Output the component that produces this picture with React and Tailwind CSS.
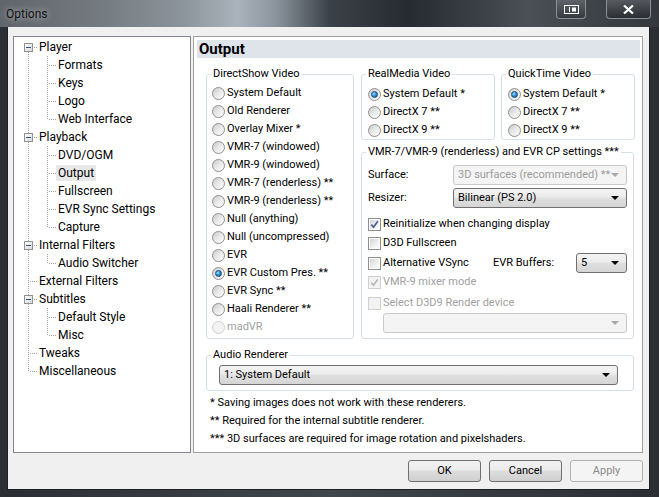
import React from "react";

const FONT = "font-['Roboto','Noto_Sans',sans-serif]";

function Radio({ checked, disabled }) {
  return (
    <span
      className={`w-[13px] h-[13px] rounded-full border shrink-0 flex items-center justify-center ${
        disabled
          ? "border-[#cfcfcf] bg-[#f3f3f3]"
          : "border-[#8e8f8f] bg-[linear-gradient(135deg,#cbcbcb_0%,#e9e9e9_50%,#ffffff_100%)]"
      }`}
    >
      {checked && (
        <span className="w-[7px] h-[7px] rounded-full border border-[#1b4a7a] bg-[radial-gradient(circle_at_35%_35%,#a5e4ff_0%,#2d93db_45%,#0b4f97_100%)]" />
      )}
    </span>
  );
}

function Check({ checked, disabled }) {
  return (
    <span
      className={`w-[13px] h-[13px] border shrink-0 p-[1px] flex ${
        disabled ? "border-[#cfcfcf] bg-[#f3f3f3]" : "border-[#8e8f8f] bg-white"
      }`}
    >
      <span
        className={`flex-1 flex items-center justify-center ${
          disabled ? "bg-[#f3f3f3]" : "bg-[linear-gradient(135deg,#d6d6d6_0%,#f4f4f4_70%,#ffffff_100%)]"
        }`}
      >
        {checked && (
          <svg width="9" height="9" viewBox="0 0 9 9">
            <path
              d="M1.3 4.6 L3.5 7.2 L7.8 1.2"
              fill="none"
              stroke={disabled ? "#b8b8b8" : "#4a5f97"}
              strokeWidth="1.7"
            />
          </svg>
        )}
      </span>
    </span>
  );
}

function Combo({ text, disabled, className = "" }) {
  return (
    <div
      className={`h-[20px] flex items-center rounded-[3px] border pl-[4px] pr-[7px] ${
        disabled
          ? "border-[#c5c9cc] bg-[#f4f4f4] text-[#9c9c9c]"
          : "border-[#707070] bg-[linear-gradient(180deg,#f3f3f3_0%,#ececec_45%,#e0e0e0_50%,#d5d5d5_100%)] text-black"
      } ${className}`}
    >
      <span className="flex-1 truncate">{text}</span>
      <svg width="8" height="4" viewBox="0 0 8 4" className="shrink-0">
        <path d="M0 0 H8 L4 4 Z" fill={disabled ? "#a8a8a8" : "#000"} />
      </svg>
    </div>
  );
}

function Btn({ children, disabled }) {
  return (
    <button
      className={`h-[22px] flex items-center justify-center rounded-[3px] border ${
        disabled
          ? "border-[#adb2b5] bg-[#f4f4f4] text-[#8a8a8a]"
          : "border-[#707070] bg-[linear-gradient(180deg,#f2f2f2_0%,#ebebeb_45%,#dddddd_50%,#cfcfcf_100%)] text-black"
      } w-[73px] text-[11px]`}
    >
      {children}
    </button>
  );
}

function Group({ title, className = "", inner = "", children }) {
  return (
    <fieldset className={`border border-[#d5dfe5] rounded-[3px] min-w-0 ${className}`}>
      <legend className="ml-[4px] px-[2px] leading-[14px] whitespace-nowrap">{title}</legend>
      <div className={inner}>{children}</div>
    </fieldset>
  );
}

function RadioRow({ label, checked, disabled }) {
  return (
    <div className={`h-[18px] flex items-center gap-[2px] ${disabled ? "text-[#a0a0a0]" : ""}`}>
      <Radio checked={checked} disabled={disabled} />
      <span className="whitespace-nowrap">{label}</span>
    </div>
  );
}

function CheckRow({ label, checked, disabled, className = "" }) {
  return (
    <div className={`flex items-center gap-[2px] ${disabled ? "text-[#a0a0a0]" : ""} ${className}`}>
      <Check checked={checked} disabled={disabled} />
      <span className="whitespace-nowrap">{label}</span>
    </div>
  );
}

const tree = [
  { t: "Player", kids: ["Formats", "Keys", "Logo", "Web Interface"] },
  { t: "Playback", kids: ["DVD/OGM", "Output", "Fullscreen", "EVR Sync Settings", "Capture"] },
  { t: "Internal Filters", kids: ["Audio Switcher"] },
  { t: "External Filters" },
  { t: "Subtitles", kids: ["Default Style", "Misc"] },
  { t: "Tweaks" },
  { t: "Miscellaneous" },
];

const DOT = "#a0a0a0";

function TopRow({ label, hasBox, first, last }) {
  return (
    <div className="h-[18px] flex items-center">
      <svg width="23" height="18" viewBox="0 0 23 18" className="shrink-0">
        {hasBox ? (
          <>
            {!first && <line x1="14.5" y1="0" x2="14.5" y2="5" stroke={DOT} strokeDasharray="1 1" />}
            {!last && <line x1="14.5" y1="14" x2="14.5" y2="18" stroke={DOT} strokeDasharray="1 1" />}
            <rect x="10.5" y="5.5" width="8" height="8" fill="url(#bx)" stroke="#919191" />
            <line x1="12" y1="9.5" x2="17" y2="9.5" stroke="#2d4f8c" />
            <line x1="20" y1="9.5" x2="23" y2="9.5" stroke={DOT} strokeDasharray="1 1" />
          </>
        ) : (
          <>
            <line x1="14.5" y1={first ? 9 : 0} x2="14.5" y2={last ? 10 : 18} stroke={DOT} strokeDasharray="1 1" />
            <line x1="16" y1="9.5" x2="23" y2="9.5" stroke={DOT} strokeDasharray="1 1" />
          </>
        )}
      </svg>
      <span className="px-[2px] leading-[16px]">{label}</span>
    </div>
  );
}

function ChildRow({ label, lastChild, selected }) {
  return (
    <div className="h-[18px] flex items-center">
      <svg width="42" height="18" viewBox="0 0 42 18" className="shrink-0">
        <line x1="14.5" y1="0" x2="14.5" y2="18" stroke={DOT} strokeDasharray="1 1" />
        <line x1="33.5" y1="0" x2="33.5" y2={lastChild ? 10 : 18} stroke={DOT} strokeDasharray="1 1" />
        <line x1="35" y1="9.5" x2="42" y2="9.5" stroke={DOT} strokeDasharray="1 1" />
      </svg>
      <span className={`px-[2px] leading-[16px] ${selected ? "bg-[#e8e8e8]" : ""}`}>{label}</span>
    </div>
  );
}

function Tree() {
  const rows = [];
  tree.forEach((n, i) => {
    rows.push(
      <TopRow key={n.t} label={n.t} hasBox={!!n.kids} first={i === 0} last={i === tree.length - 1} />
    );
    (n.kids || []).forEach((k, j) => {
      rows.push(
        <ChildRow key={k} label={k} lastChild={j === n.kids.length - 1} selected={k === "Output"} />
      );
    });
  });
  return (
    <div className="w-[178px] h-[417px] bg-white border border-[#828790] pt-[1px] text-[12px] text-black">
      <svg width="0" height="0" className="absolute">
        <defs>
          <linearGradient id="bx" x1="0" y1="0" x2="1" y2="1">
            <stop offset="0" stopColor="#ffffff" />
            <stop offset="1" stopColor="#d8d8d8" />
          </linearGradient>
        </defs>
      </svg>
      {rows}
    </div>
  );
}

function Panel() {
  return (
    <div className="w-[450px] h-[417px] bg-white border border-[#a0a0a0] text-[11px] text-black">
      <div className="mt-[3px] ml-[3px] mr-[2px] h-[18px] bg-[#dfe4ea] flex items-center pl-[2px]">
        <span className="text-[15px] font-bold leading-none">Output</span>
      </div>
      <div className="pl-[12px] pt-[9px]">
        <div className="flex gap-[7px]">
          <Group title="DirectShow Video" className="w-[148px] h-[272px]" inner="pl-[5px] pt-[3px]">
            <RadioRow label="System Default" />
            <RadioRow label="Old Renderer" />
            <RadioRow label="Overlay Mixer *" />
            <RadioRow label="VMR-7 (windowed)" />
            <RadioRow label="VMR-9 (windowed)" />
            <RadioRow label="VMR-7 (renderless) **" />
            <RadioRow label="VMR-9 (renderless) **" />
            <RadioRow label="Null (anything)" />
            <RadioRow label="Null (uncompressed)" />
            <RadioRow label="EVR" />
            <RadioRow label="EVR Custom Pres. **" checked />
            <RadioRow label="EVR Sync **" />
            <RadioRow label="Haali Renderer **" />
            <RadioRow label="madVR" disabled />
          </Group>
          <div className="flex flex-col">
            <div className="flex gap-[6px]">
              <Group title="RealMedia Video" className="w-[134px] h-[73px]" inner="pl-[6px] pt-[4px]">
                <RadioRow label="System Default *" checked />
                <RadioRow label="DirectX 7 **" />
                <RadioRow label="DirectX 9 **" />
              </Group>
              <Group title="QuickTime Video" className="w-[134px] h-[73px]" inner="pl-[6px] pt-[4px]">
                <RadioRow label="System Default *" checked />
                <RadioRow label="DirectX 7 **" />
                <RadioRow label="DirectX 9 **" />
              </Group>
            </div>
            <Group
              title="VMR-7/VMR-9 (renderless) and EVR CP settings ***"
              className="mt-[5px] w-[273px] h-[194px]"
              inner="pl-[6px] pr-[6px]"
            >
              <div className="mt-[6px] h-[20px] flex items-center">
                <span className="w-[85px] shrink-0">Surface:</span>
                <Combo text="3D surfaces (recommended) **" disabled className="flex-1 min-w-0" />
              </div>
              <div className="mt-[3px] h-[20px] flex items-center">
                <span className="w-[85px] shrink-0">Resizer:</span>
                <Combo text="Bilinear (PS 2.0)" className="flex-1 min-w-0" />
              </div>
              <CheckRow className="mt-[7px] h-[19px]" label="Reinitialize when changing display" checked />
              <CheckRow className="h-[19px]" label="D3D Fullscreen" />
              <div className="h-[20px] flex items-center">
                <CheckRow className="w-[125px] shrink-0" label="Alternative VSync" />
                <span className="w-[83px] shrink-0">EVR Buffers:</span>
                <Combo text="5" className="flex-1 min-w-0" />
              </div>
              <CheckRow className="h-[19px]" label="VMR-9 mixer mode" checked disabled />
              <CheckRow className="mt-[2px] h-[19px]" label="Select D3D9 Render device" disabled />
              <Combo text="" disabled className="ml-[15px]" />
            </Group>
          </div>
        </div>
        <Group title="Audio Renderer" className="mt-[9px] w-[428px] h-[43px]" inner="pl-[12px] pr-[15px] pt-[3px]">
          <Combo text="1: System Default" />
        </Group>
        <div className="pl-[4px] pt-[3px] leading-[18px]">
          <div>* Saving images does not work with these renderers.</div>
          <div>** Required for the internal subtitle renderer.</div>
          <div>*** 3D surfaces are required for image rotation and pixelshaders.</div>
        </div>
      </div>
    </div>
  );
}

export default function App() {
  return (
    <div className={`w-[659px] h-[497px] flex flex-col bg-[linear-gradient(90deg,#2b2f33_0%,#41464b_50%,#2b2f33_100%)] ${FONT}`}>
      <div className="h-[27px] shrink-0 flex items-start bg-[linear-gradient(90deg,#5f656b_0%,#737a80_15%,#8d959c_28%,#aab3bb_36%,#8a939b_42%,#3b4148_50%,#262b31_62%,#3a3f45_72%,#4b5056_80%,#3e4348_90%,#34383d_100%)]">
        <span className="ml-[6px] mt-[6px] text-[12px] leading-[16px] text-[#111] [text-shadow:0_0_6px_rgba(255,255,255,0.7)]">
          Options
        </span>
        <div className="ml-auto flex items-start mr-[8px]">
          <div className="w-[30px] h-[19px] rounded-b-[4px] border border-t-0 border-[#8a9096] bg-[linear-gradient(180deg,rgba(255,255,255,0.15),rgba(0,0,0,0.2))] flex items-center justify-center">
            <svg width="15" height="9" viewBox="0 0 15 9">
              <rect x="0.5" y="0.5" width="14" height="8" fill="none" stroke="#fff" />
              <rect x="8" y="2.5" width="4" height="4" fill="#fff" />
              <line x1="5.5" y1="2" x2="5.5" y2="7" stroke="#fff" />
            </svg>
          </div>
          <div className="ml-[20px] w-[45px] h-[19px] rounded-b-[4px] border border-t-0 border-[#8a9096] bg-[linear-gradient(180deg,rgba(255,255,255,0.15),rgba(0,0,0,0.25))] flex items-center justify-center">
            <svg width="11" height="9" viewBox="0 0 11 9">
              <path d="M1 0.5 L10 8.5 M10 0.5 L1 8.5" stroke="#fff" strokeWidth="2.2" />
            </svg>
          </div>
        </div>
      </div>
      <div className="flex-1 pl-[7px] pr-[9px] pb-[7px] flex">
        <div className="flex-1 bg-[#f0f0f0] border border-[#1d2024] border-t-0 pl-[5px] pt-[9px] flex flex-col">
          <div className="flex gap-[2px]">
            <Tree />
            <Panel />
          </div>
          <div className="flex justify-end gap-[8px] mt-[7px] pr-[6px] text-[11px]">
            <Btn>OK</Btn>
            <Btn>Cancel</Btn>
            <Btn disabled>Apply</Btn>
          </div>
        </div>
      </div>
    </div>
  );
}
